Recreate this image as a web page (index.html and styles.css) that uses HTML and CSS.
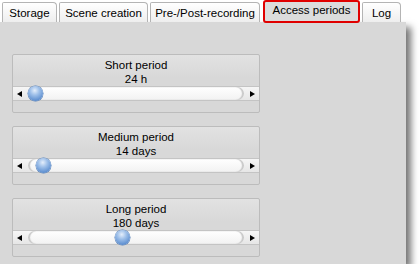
FILE: index.html
```html
<!DOCTYPE html>
<html lang="en">
<head>
  <meta charset="UTF-8">
  <title>Access periods</title>
  <link rel="stylesheet" href="styles.css">
</head>
<body>
  <div class="window">
    <div class="tabs">
      <div class="tab tab-storage">Storage</div>
      <div class="tab tab-scene">Scene creation</div>
      <div class="tab tab-rec">Pre-/Post-recording</div>
      <div class="tab tab-access active">Access periods</div>
      <div class="tab tab-log">Log</div>
    </div>

    <div class="panel">
      <div class="group">
        <div class="label">Short period</div>
        <div class="value">24 h</div>
        <div class="slider">
          <span class="arrow left"></span>
          <div class="groove"><span class="thumb" style="left: 0px"></span></div>
          <span class="arrow right"></span>
        </div>
      </div>

      <div class="group">
        <div class="label">Medium period</div>
        <div class="value">14 days</div>
        <div class="slider">
          <span class="arrow left"></span>
          <div class="groove"><span class="thumb" style="left: 8px"></span></div>
          <span class="arrow right"></span>
        </div>
      </div>

      <div class="group">
        <div class="label">Long period</div>
        <div class="value">180 days</div>
        <div class="slider">
          <span class="arrow left"></span>
          <div class="groove"><span class="thumb" style="left: 87px"></span></div>
          <span class="arrow right"></span>
        </div>
      </div>
    </div>
  </div>
</body>
</html>
```

FILE: styles.css
```css
body { margin: 0; background: #fff; font-family: "Liberation Sans", Arial, sans-serif; font-size: 11.5px; color: #000; }

.window { width: 406px; }

.tabs { display: flex; align-items: flex-end; height: 22px; padding-left: 2px; }
.tab {
  height: 19px; line-height: 20px; text-align: center;
  background: linear-gradient(#ffffff, #eeeeee);
  border: 1px solid #b4b4b4; border-bottom: none;
  border-radius: 2px 4px 0 0;
  margin-right: 2px;
}
.tab-storage { width: 53px; }
.tab-scene { width: 87px; }
.tab-rec { width: 108px; margin-right: 3px; }
.tab-access { width: 95px; }
.tab-log { width: 37px; }
.tab.active {
  height: 19px; line-height: 17px;
  background: #dcdcdc;
  border: 2px solid #e00000; border-radius: 3px;
  margin-bottom: -1px; position: relative;
  width: 93px;
}

.panel {
  height: 242px; box-sizing: border-box;
  background: #d8d8d8;
  padding: 32px 0 0 12px;
  box-shadow: 5px 5px 7px rgba(0, 0, 0, 0.55);
}

.group {
  width: 246px; margin-bottom: 13px;
  border: 1px solid #bcbcbc; border-radius: 2px;
  background: linear-gradient(#e2e2e2, #d8d8d8 40%);
  padding: 3px 0 11px;
  text-align: center;
}
.label, .value { line-height: 14px; }

.slider {
  display: flex; align-items: center; height: 13px;
  border-top: 1px solid #c4c4c4; border-bottom: 1px solid #c4c4c4;
  background: linear-gradient(#f6f6f6, #e6e6e6);
}
.arrow { width: 15px; height: 13px; position: relative; flex: none; }
.arrow::after {
  content: ""; position: absolute; top: 4px;
  border-top: 3px solid transparent; border-bottom: 3px solid transparent;
}
.arrow.left::after { left: 4px; border-right: 5px solid #000; }
.arrow.right::after { left: 6px; border-left: 5px solid #000; }

.groove {
  flex: 1; height: 13px; position: relative;
  border-radius: 7px;
  background: linear-gradient(#ffffff, #f2f2f2);
  box-shadow: inset 2px 0 1px #c8c8c8, inset -2px 0 1px #c8c8c8;
}
.thumb {
  position: absolute; top: -1px; width: 15px; height: 15px; border-radius: 50%;
  background: radial-gradient(circle at 45% 30%, #e4eefb 0, #9dbfe9 35%, #5e8fd0 75%, #4a78b8 100%);
  box-shadow: 0 0 0 0.5px #5a82b8;
}
```
